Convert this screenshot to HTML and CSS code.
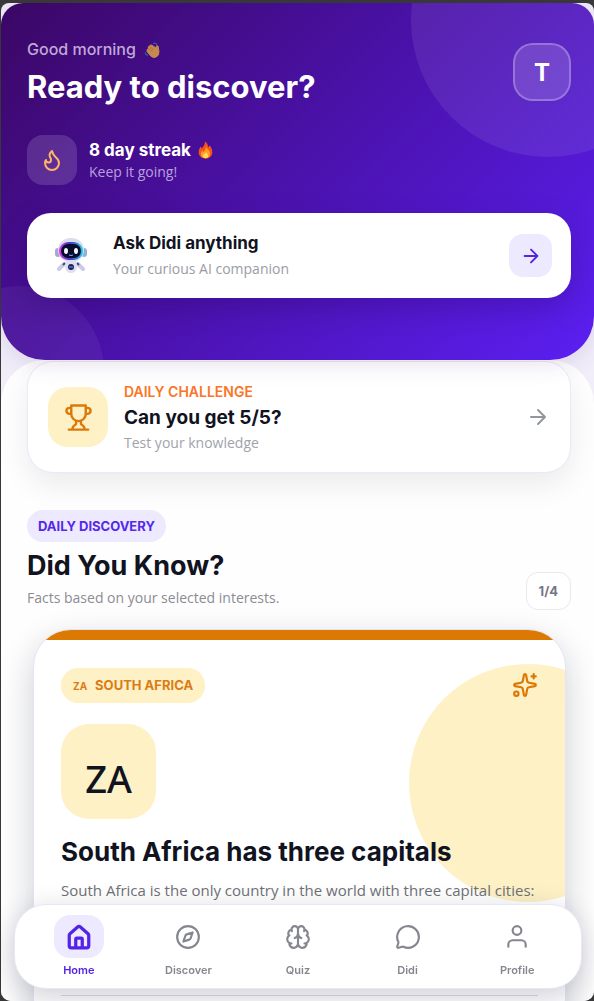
FILE: index.html
```html
<!DOCTYPE html>
<html lang="en">
<head>
    <meta charset="UTF-8">
    <meta name="viewport" content="width=device-width, initial-scale=1.0">
    <title>Home</title>
    <link rel="stylesheet" href="styles.css">
</head>
<body>

    <div class="app">
        <header class="hero">
            <div class="hero-top">
                <div>
                    <p class="greeting">Good morning
                        <svg class="wave" viewBox="0 0 16 16" aria-hidden="true">
                            <path d="M9 1.500 Q12 .5 13 3M1 10.500Q1.500 13 4 13.500" fill="none" stroke="#2f55b8" stroke-width="1.300"/>
                            <path d="M3.200 7.500 4.500 6.300 4.300 4.700 5.600 4.200 6.300 3 7.800 3.200 12 6 12.600 3.800 14 4 15 9.500Q15.200 14 11.500 15.300 8.500 16 6.500 13.800L3 9.500Z" fill="#c68a4e" stroke="#c68a4e" stroke-linejoin="round"/>
                            <path d="M5 6.500 8 9.500M6.500 5 9.500 8" stroke="#94602f" stroke-width=".7"/>
                        </svg>
                    </p>
                    <h1>Ready to discover?</h1>
                </div>
                <a href="#profile" class="avatar" aria-label="Your profile">T</a>
            </div>

            <div class="streak">
                <span class="streak-icon">
                    <svg class="icon" viewBox="0 0 24 24"><path d="M8.500 14.500A2.500 2.500 0 0 0 11 12c0-1.380-.5-2-1-3-1.072-2.143-.224-4.054 2-6 .5 2.500 2 4.900 4 6.500 2 1.600 3 3.500 3 5.500a7 7 0 1 1-14 0c0-1.153.433-2.294 1-3a2.500 2.500 0 0 0 2.500 2.500z"/></svg>
                </span>
                <div>
                    <p class="streak-title">8 day streak
                        <svg class="flame" viewBox="0 0 16 18" aria-hidden="true">
                            <path d="M7.500 0C10.500 2 10.500 4.500 11 6c.8-.6 1-1.500 1-2.200C14 5.500 15.300 8 15.300 11c0 4.500-3 7-7.300 7S.7 15.500.7 11.500C.7 8.500 2 7 2.700 5.300c.8.7 1 1.500 1.200 2.200C6 5.500 7.300 3.500 7.500 0z" fill="#f4511e"/>
                            <path d="M8.500 5c1 3 4.500 4.500 4.500 8 0 3-2.200 4.800-5 4.800S3 16 3 13.500C3 11.500 4 10.500 5 9.500c.3 1 .6 1.300 1.200 1.500C7.500 9 8.500 7.500 8.500 5z" fill="#ff9c27"/>
                            <path d="M8.500 11c.5 1.500 2.300 2 2.300 4 0 1.700-1.200 2.700-2.800 2.700S5.200 16.700 5.200 15C5.200 13.500 7.800 13 8.500 11z" fill="#ffdb55"/>
                        </svg>
                    </p>
                    <p class="streak-text">Keep it going!</p>
                </div>
            </div>

            <a href="#didi" class="ask-card">
                <span class="robot">
                    <svg viewBox="0 0 34 36" aria-hidden="true">
                        <defs>
                            <linearGradient id="visor" x1="0" x2="1">
                                <stop offset="0" stop-color="#e03cf0"/>
                                <stop offset=".45" stop-color="#4238c8"/>
                                <stop offset="1" stop-color="#20d0e0"/>
                            </linearGradient>
                        </defs>
                        <rect x="1" y="10" width="6" height="9" rx="3" fill="#a9a5cf"/>
                        <rect x="27" y="10" width="6" height="9" rx="3" fill="#8fb0dc"/>
                        <path d="M10 26 5 31M24 26 29 31" stroke="#c9cbe8" stroke-width="4" stroke-linecap="round"/>
                        <path d="M11 25 9 27M23 25 25 27" stroke="#454a78" stroke-width="2"/>
                        <path d="M12 23h10l1 6q-1 6-6 6t-6-6z" fill="#dfdff4"/>
                        <rect x="4" y="0" width="26" height="24" rx="12" fill="#dedcf0"/>
                        <rect x="5" y="4" width="24" height="18" rx="9" fill="url(#visor)"/>
                        <rect x="7" y="6" width="20" height="14" rx="7" fill="#080d2e"/>
                        <ellipse cx="12" cy="13" rx="2" ry="3" fill="#f3f5ff"/>
                        <ellipse cx="22" cy="13" rx="2" ry="3" fill="#f3f5ff"/>
                        <path d="M15 17q2 1 4 0" stroke="#8ca8ff" fill="none"/>
                        <circle cx="17" cy="29" r="3" fill="#1d2459"/>
                        <path d="M15 29h4" stroke="#7994ef"/>
                    </svg>
                </span>
                <span class="ask-body">
                    <span class="ask-title">Ask Didi anything</span>
                    <span class="ask-text">Your curious AI companion</span>
                </span>
                <span class="ask-arrow">
                    <svg class="icon" viewBox="0 0 24 24"><path d="M5 12h14M12 5l7 7-7 7"/></svg>
                </span>
            </a>
        </header>

        <main class="sheet">
            <a href="#challenge" class="challenge">
                <span class="challenge-icon">
                    <svg class="icon" viewBox="0 0 24 24"><path d="M6 9H4.500a2.500 2.500 0 0 1 0-5H6M18 9h1.500a2.500 2.500 0 0 0 0-5H18M4 22h16M10 14.660V17c0 .55-.47.98-.97 1.210C7.850 18.750 7 20.240 7 22M14 14.660V17c0 .55.47.98.97 1.210C16.150 18.750 17 20.240 17 22M18 2H6v7a6 6 0 0 0 12 0V2Z"/></svg>
                </span>
                <span class="challenge-body">
                    <span class="challenge-label">DAILY CHALLENGE</span>
                    <span class="challenge-title">Can you get 5/5?</span>
                    <span class="challenge-text">Test your knowledge</span>
                </span>
                <svg class="icon challenge-arrow" viewBox="0 0 24 24"><path d="M5 12h14M12 5l7 7-7 7"/></svg>
            </a>

            <section class="discovery">
                <div class="discovery-head">
                    <div>
                        <span class="tag">DAILY DISCOVERY</span>
                        <h2>Did You Know?</h2>
                        <p class="discovery-text">Facts based on your selected interests.</p>
                    </div>
                    <span class="counter">1/4</span>
                </div>

                <article class="fact">
                    <div class="fact-top">
                        <span class="country"><span class="country-code">ZA</span>SOUTH AFRICA</span>
                        <svg class="icon sparkles" viewBox="0 0 24 24"><path d="M11.017 2.814a1 1 0 0 1 1.966 0l1.051 5.558a2 2 0 0 0 1.594 1.594l5.558 1.051a1 1 0 0 1 0 1.966l-5.558 1.051a2 2 0 0 0-1.594 1.594l-1.051 5.558a1 1 0 0 1-1.966 0l-1.051-5.558a2 2 0 0 0-1.594-1.594l-5.558-1.051a1 1 0 0 1 0-1.966l5.558-1.051a2 2 0 0 0 1.594-1.594zM20 2v4M22 4h-4"/><circle cx="4" cy="20" r="2"/></svg>
                    </div>
                    <div class="flag">ZA</div>
                    <h3>South Africa has three capitals</h3>
                    <p class="fact-text">South Africa is the only country in the world with three capital cities:</p>
                    <hr>
                </article>
            </section>
        </main>
    </div>

    <nav class="tabs">
        <a href="#home" class="tab active">
            <span class="tab-icon"><svg class="icon" viewBox="0 0 24 24"><path d="M3 10.500a2 2 0 0 1 .7-1.500l7-6.200a2 2 0 0 1 2.600 0l7 6.200a2 2 0 0 1 .7 1.500V20a2 2 0 0 1-2 2H5a2 2 0 0 1-2-2zM9 22v-8a1 1 0 0 1 1-1h4a1 1 0 0 1 1 1v8"/></svg></span>
            Home
        </a>
        <a href="#discover" class="tab">
            <span class="tab-icon"><svg class="icon" viewBox="0 0 24 24"><circle cx="12" cy="12" r="10"/><path d="m16.240 7.760-1.804 5.411a2 2 0 0 1-1.265 1.265L7.760 16.240l1.804-5.411a2 2 0 0 1 1.265-1.265z"/></svg></span>
            Discover
        </a>
        <a href="#quiz" class="tab">
            <span class="tab-icon"><svg class="icon" viewBox="0 0 24 24"><path d="M12 5a3 3 0 1 0-5.997.125 4 4 0 0 0-2.526 5.770 4 4 0 0 0 .556 6.588A4 4 0 1 0 12 18ZM12 5a3 3 0 1 1 5.997.125 4 4 0 0 1 2.526 5.770 4 4 0 0 1-.556 6.588A4 4 0 1 1 12 18ZM15 13a4.500 4.500 0 0 1-3-4 4.500 4.500 0 0 1-3 4M17.599 6.500a3 3 0 0 0 .399-1.375M6.003 5.125A3 3 0 0 0 6.401 6.500M3.477 10.896a4 4 0 0 1 .585-.396M19.938 10.500a4 4 0 0 1 .585.396M6 18a4 4 0 0 1-1.967-.516M19.967 17.484A4 4 0 0 1 18 18"/></svg></span>
            Quiz
        </a>
        <a href="#didi" class="tab">
            <span class="tab-icon"><svg class="icon" viewBox="0 0 24 24"><path d="M2.992 16.342a2 2 0 0 1 .094 1.167l-1.065 3.290a1 1 0 0 0 1.236 1.168l3.413-.998a2 2 0 0 1 1.099.092 10 10 0 1 0-4.777-4.719"/></svg></span>
            Didi
        </a>
        <a href="#profile" class="tab">
            <span class="tab-icon"><svg class="icon" viewBox="0 0 24 24"><path d="M20 21v-2a4 4 0 0 0-4-4H8a4 4 0 0 0-4 4v2"/><circle cx="12" cy="6" r="4"/></svg></span>
            Profile
        </a>
    </nav>

</body>
</html>
```

FILE: styles.css
```css
* {
    box-sizing: border-box;
}
body {
    margin: 0;
    padding: 3px 0 0 1px;
    height: 100vh;
    overflow: hidden;
    background-color: #383838;
    font-family: Inter, "Open Sans", sans-serif;
    color: #11131f;
}
h1, h2, h3, p {
    margin: 0;
}
a {
    color: inherit;
    text-decoration: none;
}
.icon {
    width: 24px;
    height: 24px;
    fill: none;
    stroke: currentColor;
    stroke-width: 2;
    stroke-linecap: round;
    stroke-linejoin: round;
}
.app {
    height: 100%;
    overflow: hidden;
    border-radius: 8px 8px 10px 10px;
    background-color: #f1eefa;
}

/* hero */
.hero {
    position: relative;
    z-index: 1;
    overflow: hidden;
    padding: 34px 23px 62px 26px;
    border-radius: 22px 22px 44px 44px;
    background: linear-gradient(135deg, #3b0764 0%, #4b12ad 50%, #5b1ff2 100%);
    box-shadow: 0 4px 24px rgba(59, 7, 100, 0.12);
    color: white;
}
.hero::before, .hero::after {
    content: "";
    position: absolute;
    z-index: -1;
    border-radius: 50%;
}
.hero::before {
    top: -120px;
    right: -91px;
    width: 274px;
    height: 274px;
    background-color: rgba(255, 255, 255, 0.08);
}
.hero::after {
    bottom: -96px;
    left: -67px;
    width: 170px;
    height: 170px;
    background-color: rgba(255, 255, 255, 0.05);
}
.hero-top {
    display: flex;
    align-items: center;
    justify-content: space-between;
}
.greeting {
    font-size: 16px;
    font-weight: 500;
    line-height: 24px;
    color: #bfa9d8;
}
.wave {
    width: 16px;
    height: 16px;
    margin-left: 4px;
    vertical-align: -3px;
}
h1 {
    margin-top: 6px;
    font-size: 31px;
    font-weight: 700;
    line-height: 40px;
}
.avatar {
    display: flex;
    align-items: center;
    justify-content: center;
    width: 58px;
    height: 58px;
    border: 2px solid rgba(255, 255, 255, 0.25);
    border-radius: 20px;
    background-color: rgba(255, 255, 255, 0.14);
    font-size: 24px;
    font-weight: 700;
}
.streak {
    display: flex;
    align-items: center;
    gap: 12px;
    margin-top: 28px;
}
.streak-icon {
    display: flex;
    align-items: center;
    justify-content: center;
    width: 50px;
    height: 50px;
    border-radius: 16px;
    background-color: rgba(255, 255, 255, 0.14);
    color: #ffb566;
}
.streak-title {
    font-size: 17px;
    font-weight: 700;
    line-height: 24px;
}
.flame {
    width: 15px;
    height: 18px;
    margin-left: 3px;
    vertical-align: -3px;
}
.streak-text {
    font-size: 14px;
    line-height: 20px;
    font-family: "Open Sans", sans-serif;
    color: #b9a0dc;
}
.ask-card {
    display: flex;
    align-items: center;
    gap: 14px;
    margin-top: 28px;
    padding: 17px 19px 17px 16px;
    border-radius: 24px;
    background-color: white;
    box-shadow: 0 10px 28px rgba(30, 5, 80, 0.25);
    color: #11131f;
}
.robot {
    display: flex;
    justify-content: center;
    width: 56px;
}
.robot svg {
    width: 34px;
    height: 36px;
}
.ask-body {
    flex: 1;
}
.ask-title, .ask-text {
    display: block;
}
.ask-title {
    font-size: 17px;
    font-weight: 700;
    line-height: 26px;
}
.ask-text {
    font-family: "Open Sans", sans-serif;
    font-size: 14px;
    line-height: 25px;
    color: #9a9ca6;
}
.ask-arrow {
    display: flex;
    align-items: center;
    justify-content: center;
    width: 43px;
    height: 43px;
    border-radius: 14px;
    background-color: #ede9fe;
    color: #5423e7;
}
.ask-arrow .icon {
    width: 22px;
    height: 22px;
}

/* content */
.sheet {
    padding: 1px 23px 0 26px;
    border-radius: 44px 44px 0 0;
    background-color: #fefefe;
}
.challenge {
    display: flex;
    align-items: center;
    gap: 16px;
    padding: 18px 20px;
    border: 1px solid #ebe8f8;
    border-radius: 26px;
    background-color: white;
    box-shadow: 0 12px 30px rgba(17, 19, 31, 0.08);
}
.challenge-icon {
    display: flex;
    align-items: center;
    justify-content: center;
    width: 60px;
    height: 60px;
    border-radius: 20px;
    background-color: #fdf1c5;
    color: #dc7908;
}
.challenge-icon .icon {
    width: 29px;
    height: 29px;
}
.challenge-body {
    flex: 1;
}
.challenge-body span {
    display: block;
}
.challenge-label {
    font-size: 14px;
    font-weight: 600;
    line-height: 24px;
    color: #fb7427;
}
.challenge-title {
    font-size: 19px;
    font-weight: 700;
    line-height: 28px;
}
.challenge-text {
    font-family: "Open Sans", sans-serif;
    font-size: 14px;
    line-height: 22px;
    color: #a1a3ab;
}
.challenge-arrow {
    color: #94969e;
}
.discovery {
    padding-top: 37px;
}
.discovery-head {
    display: flex;
    align-items: flex-end;
    justify-content: space-between;
}
.tag {
    display: inline-block;
    padding: 0 11px;
    border-radius: 16px;
    background-color: #ede9fe;
    font-size: 13px;
    font-weight: 700;
    line-height: 32px;
    color: #5528ea;
}
h2 {
    margin-top: 4px;
    font-size: 27px;
    font-weight: 700;
    line-height: 40px;
}
.discovery-text {
    font-family: "Open Sans", sans-serif;
    font-size: 14px;
    font-weight: 500;
    line-height: 24px;
    color: #8b8c93;
}
.counter {
    padding: 0 12px;
    border: 1px solid #e9e8f0;
    border-radius: 12px;
    background-color: white;
    font-size: 13px;
    font-weight: 700;
    line-height: 36px;
    color: #737588;
}
.fact {
    position: relative;
    z-index: 0;
    overflow: hidden;
    margin: 19px 5px 0 6px;
    padding: 38px 27px 40px;
    border: 1px solid #e6e3f6;
    border-radius: 38px;
    background-color: white;
    box-shadow: 0 12px 34px rgba(17, 19, 51, 0.2);
}
.fact::before, .fact::after {
    content: "";
    position: absolute;
    z-index: -1;
}
.fact::before {
    top: 34px;
    right: -82px;
    width: 238px;
    height: 238px;
    border-radius: 50%;
    background-color: #fdf1c5;
}
.fact::after {
    top: 0;
    right: 0;
    left: 0;
    height: 10px;
    background-color: #dc7903;
}
.fact-top {
    display: flex;
    justify-content: space-between;
}
.country {
    padding: 0 12px;
    border-radius: 17px;
    background-color: #fdf1c5;
    font-size: 13px;
    font-weight: 700;
    line-height: 34px;
    color: #dc7b14;
}
.country-code {
    margin-right: 8px;
    font-size: 10px;
}
.sparkles {
    width: 26px;
    height: 26px;
    margin-top: 4px;
    color: #dc7903;
}
.flag {
    display: flex;
    align-items: center;
    justify-content: center;
    width: 95px;
    height: 95px;
    margin-top: 21px;
    padding-top: 12px;
    border-radius: 28px;
    background-color: #fdf1c5;
    font-family: "Noto Sans", sans-serif;
    font-size: 38px;
    font-weight: 500;
}
h3 {
    margin-top: 15px;
    font-size: 26px;
    font-weight: 700;
    line-height: 36px;
}
.fact-text {
    margin-top: 8px;
    font-family: "Open Sans", sans-serif;
    font-size: 15px;
    line-height: 25px;
    color: #6f7178;
}
hr {
    margin: 92px 0 0;
    border: 0;
    border-top: 1px solid #dddbe5;
}

/* bottom bar, floats over the page */
.tabs {
    position: fixed;
    right: 12px;
    bottom: 12px;
    left: 14px;
    z-index: 2;
    display: flex;
    padding: 10px 9px 9px;
    border: 1px solid #e9e6f5;
    border-radius: 32px;
    background-color: white;
    box-shadow: 0 8px 30px rgba(17, 19, 51, 0.2);
}
.tab {
    display: flex;
    flex: 1;
    flex-direction: column;
    align-items: center;
    gap: 3px;
    font-size: 11px;
    font-weight: 600;
    line-height: 18px;
    color: #85868f;
}
.tab-icon {
    display: flex;
    align-items: center;
    justify-content: center;
    width: 50px;
    height: 43px;
    border-radius: 16px;
}
.tab-icon .icon {
    width: 26px;
    height: 26px;
}
.active {
    color: #5423e7;
}
.active .tab-icon {
    background-color: #ede9fe;
}
.active .icon {
    stroke-width: 3;
}
```
